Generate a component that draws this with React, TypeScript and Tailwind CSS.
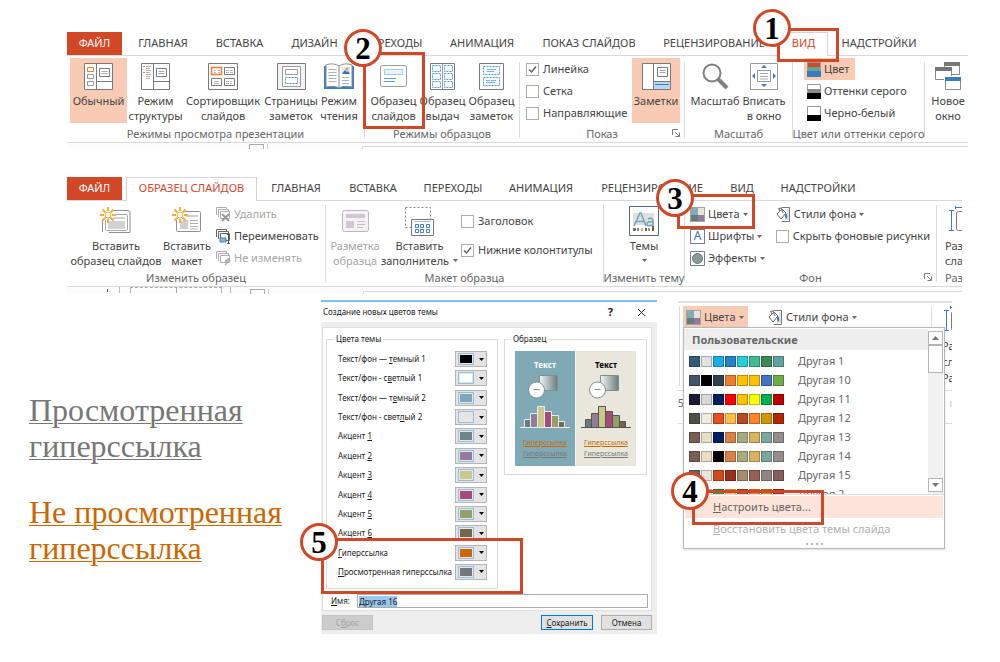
import { useEffect, useRef, type ReactNode } from 'react';

/* ---------- icons ---------- */

const G = '#7a7a7a';

function NormalIcon() {
  return (
    <svg width="29" height="27" viewBox="0 0 29 27" fill="none" stroke={G} aria-hidden="true">
      <path d="M.5.5h28v26H.5z" fill="#fff" />
      <path d="M12.5.5v26M12.5 18.5h16" />
      <path d="M3.500 4.500h6v4h-6z" stroke="#ed7d31" />
      <path d="M3.500 11.500h6v4h-6zM3.500 18.500h6v4h-6z" stroke="#999" />
      <path d="M15.500 5.500h10v8h-10z" />
      <path d="M17.500 8.500h6M17.500 10.500h6" stroke="#aaa" />
    </svg>
  );
}
function OutlineIcon() {
  return (
    <svg width="29" height="27" viewBox="0 0 29 27" fill="none" stroke={G} aria-hidden="true">
      <path d="M.5.5h28v26H.5z" fill="#fff" />
      <path d="M12.500.5v26M12.500 18.500h16M15.500 5.500h10v8h-10z" />
      <path d="M17.500 8.500h6M17.500 10.500h6" stroke="#aaa" />
      <path d="M2 3.500h2M2 9.500h2" stroke="#ed7d31" />
      <path d="M5 3.500h5M5 5.500h4M5 7.500h5M5 9.500h4M5 11.500h5M5 13.500h4M5 15.500h4" stroke="#b5b5b5" />
    </svg>
  );
}
function SorterIcon() {
  return (
    <svg width="30" height="27" viewBox="0 0 30 27" fill="none" stroke={G} aria-hidden="true">
      <path d="M.5.5h29v26H.5z" fill="#fff" />
      <path d="M16.500 4.500h10v7h-10zM3.500 15.500h10v7h-10zM16.500 15.500h10v7h-10z" />
      <path d="M3.500 4.500h10v7h-10z" stroke="#ed7d31" strokeWidth="1.500" />
      <path d="M6 7.500h2M10 7.500h2M6 9.500h2M10 9.500h2M18 7.500h3M22 7.500h3M18 9.500h3M22 9.500h3M6 18.500h5M6 20.500h5M18 18.500h3M22 18.500h2M18 20.500h3M22 20.500h2" stroke="#b5b5b5" />
    </svg>
  );
}
function NotesPageIcon() {
  return (
    <svg width="29" height="27" viewBox="0 0 29 27" fill="none" stroke={G} aria-hidden="true">
      <path d="M.5.500h28v26H.5z" fill="#f4f4f4" />
      <path d="M5.500 3.500h18v20h-18z" fill="#fff" stroke="#999" />
      <path d="M8.500 6.500h12v5h-12z" stroke="#999" />
      <path d="M8.500 14.500h12v6h-12z" stroke="#4a8fd0" strokeDasharray="2 1" />
    </svg>
  );
}
function ReadingIcon() {
  return (
    <svg width="30" height="27" viewBox="0 0 30 27" fill="none" aria-hidden="true">
      <path d="M0 3h30v23H0z" fill="#3b7cc0" />
      <path d="M2 2c5-2 10-1 13 1 3-2 8-3 13-1v22c-5-1-10-1-13 1-3-2-8-2-13-1z" fill="#fff" stroke="#8a8a8a" />
      <path d="M15 3v22" stroke="#8a8a8a" />
      <path d="M4.500 6.500h8M4.500 9.500h8M4.500 12.500h8M4.500 15.500h8M4.500 18.500h8M18 14.500h7M18 17.500h7M18 20.500h7" stroke="#b0b0b0" />
      <path d="M18 4h8v7h-8z" fill="#dce9f5" />
      <path d="M18 11l3-4 2 2 1-1 2 3z" fill="#2e75b6" />
      <circle cx="23" cy="6" r="1.500" fill="#f0a030" />
    </svg>
  );
}
function SlideMasterIcon() {
  return (
    <svg width="27" height="27" viewBox="0 0 27 27" fill="none" aria-hidden="true">
      <rect x=".5" y="2.500" width="26" height="21" rx="2" fill="#fff" stroke="#9a9a9a" />
      <path d="M4.500 6.500h18v5h-18z" fill="#eaf2fa" stroke="#5b9bd5" strokeDasharray="1 1" />
      <path d="M4 15.500h12M4 18.500h11" stroke="#5b9bd5" />
    </svg>
  );
}
function HandoutIcon() {
  return (
    <svg width="25" height="27" viewBox="0 0 25 27" fill="none" aria-hidden="true">
      <path d="M.5.500h24v26H.5z" fill="#fff" stroke={G} />
      <path d="M2.500 2.500h8v6h-8zM14.500 2.500h8v6h-8zM2.500 10.500h8v6h-8zM14.500 10.500h8v6h-8zM2.500 18.500h8v6h-8zM14.500 18.500h8v6h-8z" stroke="#5b9bd5" strokeDasharray="2 1" fill="#f2f7fc" />
      <path d="M12.500 1v25" stroke="#9a9a9a" />
    </svg>
  );
}
function NotesMasterIcon() {
  return (
    <svg width="25" height="27" viewBox="0 0 25 27" fill="none" aria-hidden="true">
      <path d="M.5.500h24v26H.5z" fill="#fff" stroke={G} />
      <path d="M4.500 3.500h16v8h-16zM4.500 14.500h16v8h-16z" stroke="#5b9bd5" strokeDasharray="2 1" fill="#f2f7fc" />
      <path d="M8 6.500h9M8 8.500h7M7 17.500h4M12 17.500h5M7 19.500h9" stroke="#7ab0e0" />
    </svg>
  );
}
function NotesIcon() {
  return (
    <svg width="29" height="27" viewBox="0 0 29 27" fill="none" stroke={G} aria-hidden="true">
      <path d="M.5.500h28v26H.5z" fill="#fff" />
      <path d="M12 18h16v8H12z" fill="#bcd8f0" stroke="none" />
      <path d="M13 21.500h14" stroke="#3b7cc0" />
      <path d="M11.500.5v26M12 18.500h16M15.500 4.500h10v9h-10z" />
      <path d="M17.500 7.500h6M17.500 9.500h6" stroke="#aaa" />
    </svg>
  );
}
function ZoomIcon() {
  return (
    <svg width="27" height="27" viewBox="0 0 27 27" fill="none" stroke="#808080" aria-hidden="true">
      <circle cx="10" cy="10" r="8.500" strokeWidth="2" fill="#fff" />
      <path d="M16 16l9 9" strokeWidth="4" />
    </svg>
  );
}
function FitIcon() {
  return (
    <svg width="28" height="27" viewBox="0 0 28 27" fill="none" stroke={G} aria-hidden="true">
      <path d="M.5.500h27v26H.5z" fill="#fff" stroke="#999" />
      <path d="M7.500 7.500h13v11h-13z" stroke="#999" />
      <path d="M10 10.500h8M10 13.500h8M10 16h8" stroke="#aaa" />
      <path d="M11 5l3-3 3 3zM11 21l3 3 3-3zM5 10l-3 3 3 3zM23 10l3 3-3 3z" fill="#3b7cc0" stroke="none" />
    </svg>
  );
}
function NewWindowIcon() {
  return (
    <svg width="27" height="29" viewBox="0 0 27 29" aria-hidden="true">
      <path d="M9.500.5h15v12h-15z" fill="#fff" stroke="#8a8a8a" />
      <path d="M9 0h16v4H9z" fill="#777" />
      <path d="M.5 5.500h16v12H.5z" fill="#fff" stroke="#8a8a8a" />
      <path d="M0 5h17v4H0z" fill="#777" />
      <path d="M9 14h18v15H9z" fill="#fff" />
      <path d="M10.500 15.500h15v12h-15z" fill="#fff" stroke="#8a8a8a" />
      <path d="M10 15h16v4H10z" fill="#3b7cc0" />
    </svg>
  );
}
function StackIcon({ colors }: { colors: [string, string, string] }) {
  return (
    <svg width="14" height="15" viewBox="0 0 14 15" aria-hidden="true">
      <path d="M.5.500h13v14H.5z" fill={colors[0]} stroke="#999" />
      <path d="M1 5h12v5H1z" fill={colors[1]} />
      <path d="M0 9h14v6H0z" fill={colors[2]} />
    </svg>
  );
}
function LauncherIcon() {
  return (
    <svg width="8" height="8" viewBox="0 0 8 8" fill="none" stroke={G} aria-hidden="true">
      <path d="M.5 6V.5H6M3 3l4 4M7.500 3.500v4h-4" />
    </svg>
  );
}
const SUN = 'M9 0v4M9 12v4M1 8h4M13 8h4M3.500 2.500l3 3M11.500 10.500l3 3M14.500 2.500l-3 3M6.500 10.500l-3 3';
function InsertMasterIcon() {
  return (
    <svg width="32" height="28" viewBox="0 0 32 28" fill="none" aria-hidden="true">
      <path d="M13 3.500h15q2 0 2 2V25.500H9M2.500 12v13" stroke="#8f8f8f" />
      <rect x="5.500" y="7.500" width="22" height="16" rx="1" fill="#fff" stroke="#a8a8a8" />
      <path d="M8 10h17v2H8zM8 14h17v8H8z" fill="#d2d2d2" />
      <circle cx="8" cy="8" r="6" fill="#fff" />
      <path d={SUN} stroke="#f2b13c" strokeWidth="2" transform="translate(-1)" />
      <circle cx="8" cy="8" r="3" fill="#fff" stroke="#f2b13c" />
    </svg>
  );
}
function InsertLayoutIcon() {
  return (
    <svg width="30" height="28" viewBox="0 0 30 28" fill="none" aria-hidden="true">
      <rect x="4.500" y="4.500" width="24" height="20" rx="1" fill="#fff" stroke="#8f8f8f" />
      <path d="M12 8h14v2H12zM8 13h8v9H8z" fill="#cfcfcf" />
      <path d="M18 13.500h8M18 16.500h8M18 19.500h8M18 22h8" stroke="#b0b0b0" />
      <circle cx="8" cy="8" r="6" fill="#fff" />
      <path d={SUN} stroke="#f2b13c" strokeWidth="2" transform="translate(-1)" />
      <circle cx="8" cy="8" r="3" fill="#fff" stroke="#f2b13c" />
    </svg>
  );
}
function LayoutIcon() {
  return (
    <svg width="27" height="24" viewBox="0 0 27 24" fill="none" aria-hidden="true">
      <rect x=".5" y="1.500" width="26" height="21" rx="2" fill="#f5f1f5" stroke="#bdb5bd" />
      <path d="M4 5h19v4H4zM4 12h8v7H4z" fill="#d0c8d0" />
      <path d="M15 12.500h8M15 15.500h8M15 18.500h6" stroke="#c9c1c9" />
    </svg>
  );
}
function PlaceholderIcon() {
  return (
    <svg width="29" height="29" viewBox="0 0 29 29" fill="none" aria-hidden="true">
      <path d="M.5.500h25v20H.5z" stroke="#8a8a8a" strokeDasharray="2 2" />
      <path d="M6.500 12.500h22v16h-22z" fill="#fff" stroke="#777" />
      <path d="M9 14.500h17" stroke="#9cc3e6" />
      <path d="M10.500 17.500h3v3h-3zM15.500 17.500h3v3h-3zM21.500 17.500h3v3h-3zM10.500 22.500h3v3h-3zM15.500 22.500h3v3h-3zM21.500 22.500h3v3h-3z" stroke="#3b7cc0" />
    </svg>
  );
}
function ThemesIcon() {
  return (
    <svg width="30" height="30" viewBox="0 0 30 30" fill="none" aria-hidden="true">
      <path d="M.5.500h29v29H.5z" fill="#fff" stroke="#52688c" />
      <path d="M4 7h21v12H4z" fill="#e0e0e0" />
      <path d="M5 20L11 7h1l5 13M7.500 15.500h8M19 13q5-2 5 2v5M24 16q-6-1-6 2t6 1" stroke="#6ea9b9" strokeWidth="1.500" />
      <path d="M4 22h3v3H4z" fill="#5f7d7d" />
      <path d="M8 22h2v3H8z" fill="#937b98" />
      <path d="M12 22h2v3h-2z" fill="#c9c377" />
      <path d="M16 22h2v3h-2z" fill="#a8436f" />
      <path d="M19 22h2v3h-2z" fill="#8f9e60" />
      <path d="M23 20h2v5h-2z" fill="#735f45" />
    </svg>
  );
}
function PaletteIcon() {
  return (
    <svg width="15" height="15" viewBox="0 0 15 15" aria-hidden="true">
      <path d="M0 0h15v15H0z" fill="#9aa5a8" />
      <path d="M1 1h7v7H1z" fill="#85abb8" />
      <path d="M8 1h6v7H8z" fill="#e8e4d8" />
      <path d="M1 8h7v6H1z" fill="#677d7c" />
      <path d="M8 8h6v6H8z" fill="#937b98" />
    </svg>
  );
}
function FontsIcon() {
  return (
    <span className="grid size-[15px] place-items-center border border-[#6f8199] bg-white text-[12px] leading-none text-[#3b6ea8]">
      A
    </span>
  );
}
function EffectsIcon() {
  return (
    <svg width="15" height="15" viewBox="0 0 15 15" aria-hidden="true">
      <path d="M.5.500h14v14H.5z" fill="#fff" stroke="#6f7fa0" />
      <circle cx="7.500" cy="7.500" r="5" fill="#8b9997" stroke="#677" />
    </svg>
  );
}
function BackgroundIcon() {
  return (
    <svg width="15" height="15" viewBox="0 0 15 15" fill="none" aria-hidden="true">
      <path d="M5.500.5h8v14h-8" fill="#fff" stroke="#777" />
      <path d="M12 2v11M9.500 9v4" stroke="#c5c5c5" />
      <path d="M1 7l5-5 4 4-5 6z" fill="#fff" stroke="#666" />
      <path d="M4 4L2.500 1.500 5 1l2 5" stroke="#666" />
      <path d="M9 6q3 0 2 6l-2-2z" fill="#3b7cc0" />
    </svg>
  );
}
function PageStackIcon({ kind, active = false }: { kind: 'delete' | 'rename' | 'keep'; active?: boolean }) {
  const c = active ? '#666' : '#b0aab0';
  return (
    <svg width="15" height="15" viewBox="0 0 15 15" fill="none" stroke={c} aria-hidden="true">
      <path d="M.5 8V.5h10V2M2.500 10V2.500h10V4" />
      <path d="M4.500 4.500h9v7h-9z" fill="#fff" />
      {kind === 'delete' && <path d="M6 7l7 7M13 7l-7 7" stroke="#999" strokeWidth="2" />}
      {kind === 'rename' && (
        <>
          <path d="M4 9h6v4H4z" fill="#8cb9e2" stroke="#3b7cc0" />
          <path d="M12.500 6v8M11 5.500h3M11 14.500h3" stroke="#555" />
        </>
      )}
      {kind === 'keep' && <path d="M9 14l2-3-2-1 4-3 1 3z" fill="#bbb" />}
    </svg>
  );
}
function SlideSizeIcon() {
  return (
    <svg width="28" height="26" viewBox="0 0 28 26" fill="none" className="shrink-0" aria-hidden="true">
      <path d="M2.500 4v20M0 4.500h5M0 24.500h5M6 1.500h20M6.500 0v3" stroke="#3b7cc0" />
      <rect x="7.500" y="5.500" width="22" height="19" rx="2" stroke="#777" />
    </svg>
  );
}
function Caret() {
  return (
    <svg width="5" height="3" viewBox="0 0 5 3" className="shrink-0" aria-hidden="true">
      <path d="M0 0h5L2.500 3z" fill="#666" />
    </svg>
  );
}

/* ---------- ribbon building blocks ---------- */

function Callout({ n, box, circle }: { n: number; box: string; circle: string }) {
  return (
    <div className={`pointer-events-none absolute z-20 border-[3px] border-[#d24726] ${box}`}>
      <span
        className={`absolute grid size-[38px] place-items-center rounded-full border-[3px] border-[#d24726] bg-white font-['Liberation_Serif',serif] text-[31px] font-bold leading-none text-black ${circle}`}
      >
        {n}
      </span>
    </div>
  );
}

function Tab({ label, width, active = false }: { label: string; width: string; active?: boolean }) {
  return (
    <button
      type="button"
      className={`shrink-0 whitespace-nowrap text-center ${width} ${
        active ? '-mb-px border border-b-0 border-[#d5d5d5] bg-white pb-0.5 text-[#dc4526]' : ''
      }`}
    >
      {label}
    </button>
  );
}

function TabBar({ children }: { children: ReactNode }) {
  return (
    <nav className="flex h-6 border-b border-[#d9d9d9] text-[11px] text-[#444]">
      <button type="button" className="w-[55px] shrink-0 bg-[#d24726] text-white">
        ФАЙЛ
      </button>
      {children}
    </nav>
  );
}

function Group({
  title,
  width,
  body = '',
  launcher = false,
  last = false,
  children,
}: {
  title: string;
  width: string;
  body?: string;
  launcher?: boolean;
  last?: boolean;
  children: ReactNode;
}) {
  return (
    <>
      <section className={`flex flex-col justify-between pb-px ${width}`}>
        <div className={`flex ${body}`}>{children}</div>
        <h3 className="relative flex justify-center whitespace-nowrap text-[11px] leading-[14px] text-[#666]">
          {title}
          {launcher && (
            <button type="button" aria-label="Параметры" className="absolute bottom-1 right-1">
              <LauncherIcon />
            </button>
          )}
        </h3>
      </section>
      {!last && <div className="mb-1 mt-1 w-px shrink-0 bg-[#dcdcdc]" />}
    </>
  );
}

function BigButton({
  icon,
  lines,
  width,
  tall = false,
  selected = false,
  disabled = false,
  caret,
}: {
  icon: ReactNode;
  lines: string[];
  width: string;
  tall?: boolean;
  selected?: boolean;
  disabled?: boolean;
  caret?: 'inline' | 'below';
}) {
  return (
    <button
      type="button"
      disabled={disabled}
      className={`flex shrink-0 flex-col items-center whitespace-nowrap pt-[5px] leading-[15px] ${width} ${
        selected ? 'bg-[#f9cbb5]' : ''
      } ${disabled ? 'text-[#a6a6a6]' : ''}`}
    >
      <span className={`flex items-center justify-center ${tall ? 'mb-0.5 h-[30px]' : 'mb-[3px] h-[27px]'}`}>{icon}</span>
      {lines.map((line, i) => (
        <span key={line} className="flex items-center gap-1">
          {line}
          {caret === 'inline' && i === lines.length - 1 && <Caret />}
        </span>
      ))}
      {caret === 'below' && (
        <span className="flex h-[15px] items-center">
          <Caret />
        </span>
      )}
    </button>
  );
}

function SmallButton({
  icon,
  label,
  caret = false,
  disabled = false,
  className = '',
}: {
  icon: ReactNode;
  label: string;
  caret?: boolean;
  disabled?: boolean;
  className?: string;
}) {
  return (
    <button
      type="button"
      disabled={disabled}
      className={`flex h-[22px] items-center gap-[3px] whitespace-nowrap ${disabled ? 'text-[#a6a6a6]' : ''} ${className}`}
    >
      {icon}
      {label}
      {caret && <Caret />}
    </button>
  );
}

function Check({ label, checked = false }: { label: string; checked?: boolean }) {
  return (
    <label className="flex h-[22px] items-center gap-1 whitespace-nowrap">
      <span className="grid">
        <input
          type="checkbox"
          defaultChecked={checked}
          className="peer col-start-1 row-start-1 size-[13px] appearance-none border border-[#ababab] bg-white"
        />
        <svg
          width="13"
          height="13"
          viewBox="0 0 13 13"
          className="pointer-events-none invisible col-start-1 row-start-1 peer-checked:visible"
          fill="none"
          stroke="#666"
          strokeWidth="1.500"
          aria-hidden="true"
        >
          <path d="M3 6.500L5.500 9 10 3.500" />
        </svg>
      </span>
      {label}
    </label>
  );
}

/* ---------- ribbons ---------- */

function ViewRibbon() {
  return (
    <section className="relative ml-[67px] mr-8">
      <TabBar>
        <div className="w-[3px] shrink-0" />
        <Tab label="ГЛАВНАЯ" width="w-[76px]" />
        <Tab label="ВСТАВКА" width="w-[77px]" />
        <Tab label="ДИЗАЙН" width="w-[73px]" />
        <Tab label="ПЕРЕХОДЫ" width="w-[84px]" />
        <Tab label="АНИМАЦИЯ" width="w-[94px]" />
        <Tab label="ПОКАЗ СЛАЙДОВ" width="w-[120px]" />
        <Tab label="РЕЦЕНЗИРОВАНИЕ" width="w-[130px]" />
        <Tab label="ВИД" width="w-[49px]" active />
        <Tab label="НАДСТРОЙКИ" width="w-[102px]" />
      </TabBar>
      <div className="flex h-[87px] overflow-hidden border-b border-[#d9d9d9] pt-0.5">
        <Group title="Режимы просмотра презентации" width="w-[297px]" body="pl-[3px]">
          <BigButton icon={<NormalIcon />} lines={['Обычный', '\u00a0']} width="w-[57px]" selected />
          <BigButton icon={<OutlineIcon />} lines={['Режим', 'структуры']} width="w-[57px]" />
          <BigButton icon={<SorterIcon />} lines={['Сортировщик', 'слайдов']} width="w-[78px]" />
          <BigButton icon={<NotesPageIcon />} lines={['Страницы', 'заметок']} width="w-[58px]" />
          <BigButton icon={<ReadingIcon />} lines={['Режим', 'чтения']} width="w-[38px]" />
        </Group>
        <Group title="Режимы образцов" width="w-[154px]" body="pl-1">
          <BigButton icon={<SlideMasterIcon />} lines={['Образец', 'слайдов']} width="w-[49px]" />
          <BigButton icon={<HandoutIcon />} lines={['Образец', 'выдач']} width="w-[49px]" />
          <BigButton icon={<NotesMasterIcon />} lines={['Образец', 'заметок']} width="w-[49px]" />
        </Group>
        <Group title="Показ" width="w-[164px]" body="justify-between pl-1.5 pr-1" launcher>
          <div className="-mb-1">
            <Check label="Линейка" checked />
            <Check label="Сетка" />
            <Check label="Направляющие" />
          </div>
          <BigButton icon={<NotesIcon />} lines={['Заметки', '\u00a0']} width="w-[48px]" selected />
        </Group>
        <Group title="Масштаб" width="w-[107px]" body="pl-[5px]">
          <BigButton icon={<ZoomIcon />} lines={['Масштаб']} width="w-[50px]" />
          <BigButton icon={<FitIcon />} lines={['Вписать', 'в окно']} width="w-[48px]" />
        </Group>
        <Group title="Цвет или оттенки серого" width="w-[131px]" body="flex-col items-start pl-[11px]">
          <SmallButton
            icon={<StackIcon colors={['#d24726', '#5fa893', '#3b7cc0']} />}
            label="Цвет"
            className="bg-[#f9cbb5] pl-[3px] pr-1.5"
          />
          <SmallButton icon={<StackIcon colors={['#fff', '#8a8a8a', '#000']} />} label="Оттенки серого" className="pl-[3px]" />
          <SmallButton icon={<StackIcon colors={['#fff', '#fff', '#000']} />} label="Черно-белый" className="pl-[3px]" />
        </Group>
        <Group title={'\u00a0'} width="min-w-0 flex-1" last>
          <BigButton icon={<NewWindowIcon />} lines={['Новое', 'окно']} width="w-[46px]" />
        </Group>
      </div>
      <div className="flex h-1.5 items-start bg-[#fcfcfc] pl-[182px]">
        <div className="mt-px h-[5px] w-[15px] border border-b-0 border-[#aaa]" />
        <div className="ml-[3px] mt-px h-[5px] w-px bg-[#ccc]" />
        <div className="ml-[94px] mt-[3px] h-[3px] flex-1 border-l border-t border-[#d9d9d9] bg-white" />
      </div>
      <Callout n={2} box="left-[296px] top-5 h-[77px] w-[62px]" circle="-left-[22px] -top-[26px]" />
      <Callout n={1} box="-top-1 left-[710px] h-[34px] w-[62px]" circle="-left-[27px] -top-[22px]" />
    </section>
  );
}

function MasterRibbon() {
  return (
    <section className="relative ml-[67px] mr-[38px] mt-7">
      <TabBar>
        <div className="w-1 shrink-0" />
        <Tab label="ОБРАЗЕЦ СЛАЙДОВ" width="w-[131px]" active />
        <Tab label="ГЛАВНАЯ" width="w-[78px]" />
        <Tab label="ВСТАВКА" width="w-[76px]" />
        <Tab label="ПЕРЕХОДЫ" width="w-[84px]" />
        <Tab label="АНИМАЦИЯ" width="w-[92px]" />
        <Tab label="РЕЦЕНЗИРОВАНИЕ" width="w-[130px]" />
        <Tab label="ВИД" width="w-[50px]" />
        <Tab label="НАДСТРОЙКИ" width="w-[102px]" />
      </TabBar>
      <div className="flex h-[86px] overflow-hidden border-b border-[#d9d9d9]">
        <Group title="Изменить образец" width="w-[258px]" body="pl-[3px]">
          <BigButton icon={<InsertMasterIcon />} lines={['Вставить', 'образец слайдов']} width="w-[92px]" tall />
          <BigButton icon={<InsertLayoutIcon />} lines={['Вставить', 'макет']} width="w-[50px]" tall />
          <div className="pl-1 pt-0.5">
            <SmallButton icon={<PageStackIcon kind="delete" />} label="Удалить" disabled />
            <SmallButton icon={<PageStackIcon kind="rename" active />} label="Переименовать" />
            <SmallButton icon={<PageStackIcon kind="keep" />} label="Не изменять" disabled />
          </div>
        </Group>
        <Group title="Макет образца" width="w-[277px]" body="pl-[3px]">
          <BigButton icon={<LayoutIcon />} lines={['Разметка', 'образца']} width="w-[52px]" tall disabled />
          <BigButton icon={<PlaceholderIcon />} lines={['Вставить', 'заполнитель']} width="w-[77px]" tall caret="inline" />
          <div className="flex flex-col gap-[7px] pl-[3px] pt-[9px]">
            <Check label="Заголовок" />
            <Check label="Нижние колонтитулы" checked />
          </div>
        </Group>
        <Group title="Изменить тему" width="w-[80px]" body="justify-center">
          <BigButton icon={<ThemesIcon />} lines={['Темы']} width="w-[48px]" tall caret="below" />
        </Group>
        <Group title="Фон" width="w-[251px]" body="gap-[11px] pl-[5px] pt-0.5" launcher>
          <div>
            <SmallButton icon={<PaletteIcon />} label="Цвета" caret />
            <SmallButton icon={<FontsIcon />} label="Шрифты" caret />
            <SmallButton icon={<EffectsIcon />} label="Эффекты" caret />
          </div>
          <div>
            <SmallButton icon={<BackgroundIcon />} label="Стили фона" caret />
            <Check label="Скрыть фоновые рисунки" />
          </div>
        </Group>
        <section className="flex min-w-0 flex-1 flex-col justify-between overflow-hidden whitespace-nowrap pb-px pl-2">
          <div className="pt-[5px] leading-[15px]">
            <div className="mb-0.5 h-[30px] pl-1">
              <SlideSizeIcon />
            </div>
            Размер
            <br />
            слайда
          </div>
          <h3 className="text-[11px] leading-[14px] text-[#666]">Размер</h3>
        </section>
      </div>
      <div className="flex h-[7px] items-start bg-[#fcfcfc] pl-10">
        <div className="mt-0.5 h-[3px] w-px bg-[#555]" />
        <div className="ml-[11px] h-1.5 w-px bg-[#bbb]" />
        <div className="ml-2.5 flex h-1.5 w-[92px] justify-center border-x border-t border-dashed border-[#aaa]">
          <div className="w-px border-l border-dashed border-[#aaa]" />
        </div>
        <div className="ml-2 h-1.5 w-px bg-[#bbb]" />
        <div className="ml-[19px] mt-0.5 h-[5px] w-[15px] border border-b-0 border-[#aaa]" />
        <div className="ml-[3px] mt-0.5 h-[5px] w-px bg-[#ccc]" />
        <div className="ml-[94px] mt-1 h-[3px] flex-1 border-l border-t border-[#d9d9d9] bg-white" />
      </div>
      <Callout n={3} box="left-[610px] top-[17px] h-[35px] w-[78px]" circle="-left-[24px] -top-[18px]" />
    </section>
  );
}

/* ---------- theme colours dialog ---------- */

const THEME_COLORS: [string, string, string, string][] = [
  ['Текст/фон — ', 'т', 'емный 1', '#000000'],
  ['Текст/фон - с', 'в', 'етлый 1', '#ffffff'],
  ['Текст/фон — т', 'е', 'мный 2', '#7fa9b4'],
  ['Текст/фон - свет', 'л', 'ый 2', '#e8e6dc'],
  ['Акцент ', '1', '', '#6f8583'],
  ['Акцент ', '2', '', '#947c99'],
  ['Акцент ', '3', '', '#cbc88c'],
  ['Акцент ', '4', '', '#a64a78'],
  ['Акцент ', '5', '', '#94a068'],
  ['Акцент ', '6', '', '#766747'],
  ['', 'Г', 'иперссылка', '#cc6600'],
  ['', 'П', 'росмотренная гиперссылка', '#777777'],
];

function Sample({ dark = false }: { dark?: boolean }) {
  const line = dark ? '#e8eeee' : '#555';
  const id = dark ? 'fade-dark' : 'fade-light';
  return (
    <div className={`flex w-[60px] flex-col items-center pt-[9px] ${dark ? 'bg-[#7fa9b4]' : 'bg-[#e9e7dc]'}`}>
      <strong className={`text-[8px] leading-[10px] ${dark ? 'text-white' : 'text-black'}`}>Текст</strong>
      <svg width="52" height="60" viewBox="0 0 52 60" className="mt-[3px]" aria-hidden="true">
        <defs>
          <linearGradient id={id}>
            <stop stopColor="#f2f4f4" />
            <stop offset="1" stopColor="#677d7c" />
          </linearGradient>
        </defs>
        <path d="M20.500 2.500h18v15h-18z" fill={`url(#${id})`} stroke="#7d8f8f" />
        <circle cx="17.500" cy="17" r="8" fill="#fff" stroke="#7d8f8f" />
        <path d="M14.500 16.500h6" stroke="#7d8f8f" />
        <g stroke={line}>
          <path d="M5.500 46.500h6v8h-6z" fill="#677d7c" />
          <path d="M11.500 40.500h7v14h-7z" fill="#947c99" />
          <path d="M18.500 33.500h7v21h-7z" fill="#cbc88c" />
          <path d="M25.500 38.500h7v16h-7z" fill="#a64a78" />
          <path d="M32.500 42.500h7v12h-7z" fill="#94a068" />
          <path d="M39.500 48.500h6v6h-6z" fill="#766747" />
          <path d="M1 54.500h50" />
        </g>
      </svg>
      <a href="#sample" className="mt-1 text-[7px] leading-[11px] text-[#cc6600] underline">
        Гиперссылка
      </a>
      <a href="#sample" className="text-[7px] leading-[11px] text-[#777] underline">
        Гиперссылка
      </a>
    </div>
  );
}

function ThemeDialog() {
  const nameRef = useRef<HTMLInputElement>(null);
  useEffect(() => {
    nameRef.current?.focus({ preventScroll: true });
    nameRef.current?.select();
  }, []);
  return (
    <div
      role="dialog"
      aria-label="Создание новых цветов темы"
      className="relative w-[336px] shrink-0 border-t-2 border-[#7fc0ee] bg-[#eee] text-[8px] text-[#1a1a1a]"
    >
      <header className="flex h-5 items-center bg-white pl-0.5 pr-[11px]">
        <h2 className="flex-1">Создание новых цветов темы</h2>
        <button type="button" aria-label="Справка" className="mr-6 text-[11px] font-bold">
          ?
        </button>
        <button type="button" aria-label="Закрыть">
          <svg width="9" height="9" viewBox="0 0 9 9" stroke="#222" aria-hidden="true">
            <path d="M1 1l7 7M8 1L1 8" />
          </svg>
        </button>
      </header>
      <div className="ml-px mr-[5px] mt-[5px] border border-[#e0e0e0] bg-white pb-0.5 pl-[3px] pr-[3px] pt-1">
        <div className="flex items-start gap-1.5">
          <fieldset className="w-[172px] border border-[#dcdcdc] pb-2 pl-[11px] pr-2.5">
            <legend className="-ml-1 px-0.5 leading-[14px]">Цвета темы</legend>
            <div className="flex h-[234px] flex-col justify-between pt-[5px]">
              {THEME_COLORS.map(([before, key, after, color]) => (
                <div key={before + key + after} className="flex items-center justify-between whitespace-nowrap">
                  <span>
                    {before}
                    <u>{key}</u>
                    {after}
                  </span>
                  <button
                    type="button"
                    aria-label={before + key + after}
                    className="flex h-4 w-8 shrink-0 items-center gap-[5px] border border-[#b5b5b5] bg-[#e4e4e4] pl-0.5"
                  >
                    <span className="border border-[#9dbbd6] bg-[#dcebf7] p-px">
                      <span className="block h-2 w-3" style={{ backgroundColor: color }} />
                    </span>
                    <svg width="5" height="3" viewBox="0 0 5 3" aria-hidden="true">
                      <path d="M0 0h5L2.500 3z" fill="#000" />
                    </svg>
                  </button>
                </div>
              ))}
            </div>
          </fieldset>
          <fieldset className="w-[143px] border border-[#dcdcdc] pb-2 pl-2.5">
            <legend className="-ml-1 px-0.5 leading-[14px]">Образец</legend>
            <div className="mt-[5px] flex h-[115px] w-[121px]">
              <Sample dark />
              <div className="w-px bg-[#f4f4f0]" />
              <Sample />
            </div>
          </fieldset>
        </div>
        <label className="mt-[5px] flex items-center gap-[7px] pl-[5px]">
          <span>
            <u>И</u>мя:
          </span>
          <input
            ref={nameRef}
            defaultValue="Другая 16"
            className="h-3.5 min-w-0 flex-1 border border-[#ababab] bg-white px-px text-[8px] leading-3 outline-none selection:bg-[#99c9ef] selection:text-[#1a1a1a]"
          />
        </label>
      </div>
      <footer className="flex gap-[17px] py-1 pl-px pr-[5px]">
        <button type="button" disabled className="h-[15px] w-[51px] border border-[#c4c4c4] bg-[#ccc] text-[#a3a3a3]">
          С<u>б</u>рос
        </button>
        <div className="flex flex-1 justify-end gap-2">
          <button type="button" className="h-[15px] w-[52px] border border-[#0078d7] bg-[#e1e1e1]">
            <u>С</u>охранить
          </button>
          <button type="button" className="h-[15px] w-[51px] border border-[#adadad] bg-[#e1e1e1]">
            Отмена
          </button>
        </div>
      </footer>
      <Callout n={5} box="left-0 top-[236px] h-[56px] w-[202px]" circle="-left-[24px] -top-[18px]" />
    </div>
  );
}

/* ---------- colours menu ---------- */

const PALETTES: [string, string[]][] = [
  ['Другая 1', ['#335b74', '#dfe3e5', '#1cade4', '#2683c6', '#27ced7', '#42ba97', '#3e8853', '#62a39f']],
  ['Другая 10', ['#44546a', '#000000', '#323f4f', '#ed7d31', '#ffc000', '#ffc000', '#4472c4', '#70ad47']],
  ['Другая 11', ['#1a1a33', '#d9d9d9', '#002060', '#ff0000', '#ffc000', '#ffff00', '#00b050', '#c00000']],
  ['Другая 12', ['#505046', '#eeece1', '#e84c22', '#ffbd47', '#b64926', '#ff8427', '#cc9900', '#b22600']],
  ['Другая 13', ['#775f55', '#ebddc3', '#002060', '#dd8047', '#a5ab81', '#d8b25c', '#7ba79d', '#968c8c']],
  ['Другая 14', ['#775f55', '#ebddc3', '#000000', '#dd8047', '#a5ab81', '#d8b25c', '#7ba79d', '#968c8c']],
  ['Другая 15', ['#696464', '#e9e5dc', '#d34817', '#9b2d1f', '#a28e6a', '#956251', '#918485', '#855d5d']],
  ['Другая 2', ['#505046', '#eeece1', '#00b050', '#ffbd47', '#b64926', '#ff8427', '#cc9900', '#b22600']],
];

function ColorsMenu() {
  return (
    <div className="absolute left-[5px] top-6 z-10 w-[262px] border border-[#b8b8b8] bg-white text-[11px] text-[#666] shadow-sm">
      <div className="flex h-[166px]">
        <div className="flex min-w-0 flex-1 flex-col overflow-hidden">
          <h3 className="mb-0.5 mt-px shrink-0 bg-[#eee] pl-2 font-bold leading-[21px]">Пользовательские</h3>
          {PALETTES.map(([name, colors]) => (
            <button key={name} type="button" className="flex h-[19px] w-full shrink-0 items-center pl-[5px] text-left">
              <span className="flex gap-px">
                {colors.map((c, i) => (
                  <span key={i} className="size-[11px] border border-black/25" style={{ backgroundColor: c }} />
                ))}
              </span>
              <span className="ml-3.5">{name}</span>
            </button>
          ))}
        </div>
        <div className="mr-px mt-[3px] flex w-[15px] flex-col bg-[#f1f1f1]">
          <button type="button" aria-label="Вверх" className="grid h-3.5 place-items-center border border-[#b5b5b5] bg-white">
            <svg width="7" height="4" viewBox="0 0 7 4" aria-hidden="true">
              <path d="M0 4h7L3.500 0z" fill="#777" />
            </svg>
          </button>
          <div className="h-7 border border-[#b5b5b5] bg-white" />
          <div className="flex-1" />
          <button type="button" aria-label="Вниз" className="mb-0.5 grid h-3.5 place-items-center border border-[#b5b5b5] bg-white">
            <svg width="7" height="4" viewBox="0 0 7 4" aria-hidden="true">
              <path d="M0 0h7L3.500 4z" fill="#777" />
            </svg>
          </button>
        </div>
      </div>
      <div className="border-t border-[#ddd] px-px pt-px">
        <button type="button" className="block w-full bg-[#fde4da] pl-7 text-left leading-[22px]">
          <u>Н</u>астроить цвета...
        </button>
        <button type="button" disabled className="block w-full whitespace-nowrap pl-7 text-left leading-[22px] text-[#b0b0b0]">
          <u>В</u>осстановить цвета темы слайда
        </button>
        <div className="flex h-2 items-center justify-center gap-[3px]">
          <i className="size-0.5 bg-[#b5bac4]" />
          <i className="size-0.5 bg-[#b5bac4]" />
          <i className="size-0.5 bg-[#b5bac4]" />
          <i className="size-0.5 bg-[#b5bac4]" />
        </div>
      </div>
      <Callout n={4} box="left-2 top-[162px] h-[35px] w-[132px]" circle="-left-[24px] -top-[21px]" />
    </div>
  );
}

function ColorsPanel() {
  return (
    <section className="relative mt-px w-[274px] shrink-0 border-t-2 border-[#e2e2e2]">
      <div className="flex h-[88px] border-b border-[#ddd] pt-[3px]">
        <div className="ml-px mr-[3px] h-20 w-px bg-[#ddd]" />
        <SmallButton icon={<PaletteIcon />} label="Цвета" caret className="w-[65px] bg-[#f9cbb5] pl-[3px]" />
        <SmallButton icon={<BackgroundIcon />} label="Стили фона" caret className="ml-5" />
        <div className="flex-1" />
        <div className="w-[21px] overflow-hidden whitespace-nowrap border-l border-[#ddd] pl-[10px] leading-4">
          <div className="h-8 pl-0.5">
            <SlideSizeIcon />
          </div>
          Размер
          <br />
          слайда
          <br />
          Размер
        </div>
      </div>
      <div className="flex h-[33px] items-center justify-between border-b border-[#ddd] text-[10px] text-[#666]">
        <span className="-mt-2">5</span>
        <span className="-mt-2 text-[#bbb]">ı</span>
      </div>
      <ColorsMenu />
    </section>
  );
}

/* ---------- page ---------- */

export default function App() {
  return (
    <main className="min-h-screen overflow-hidden bg-white pt-8 font-['Noto_Sans',sans-serif] text-[11px] text-[#444]">
      <ViewRibbon />
      <MasterRibbon />
      <div className="mt-1.5 flex items-start">
        <div className="ml-[29px] mt-[92px] flex w-[292px] shrink-0 flex-col items-start gap-[30px] font-['Liberation_Serif',serif] text-[32px] leading-9">
          <a href="#visited" className="text-[#777] underline decoration-1 underline-offset-2">
            Просмотренная гиперссылка
          </a>
          <a href="#unvisited" className="text-[#cc6600] underline decoration-1 underline-offset-2">
            Не просмотренная гиперссылка
          </a>
        </div>
        <ThemeDialog />
        <div className="w-[21px] shrink-0" />
        <ColorsPanel />
      </div>
    </main>
  );
}
